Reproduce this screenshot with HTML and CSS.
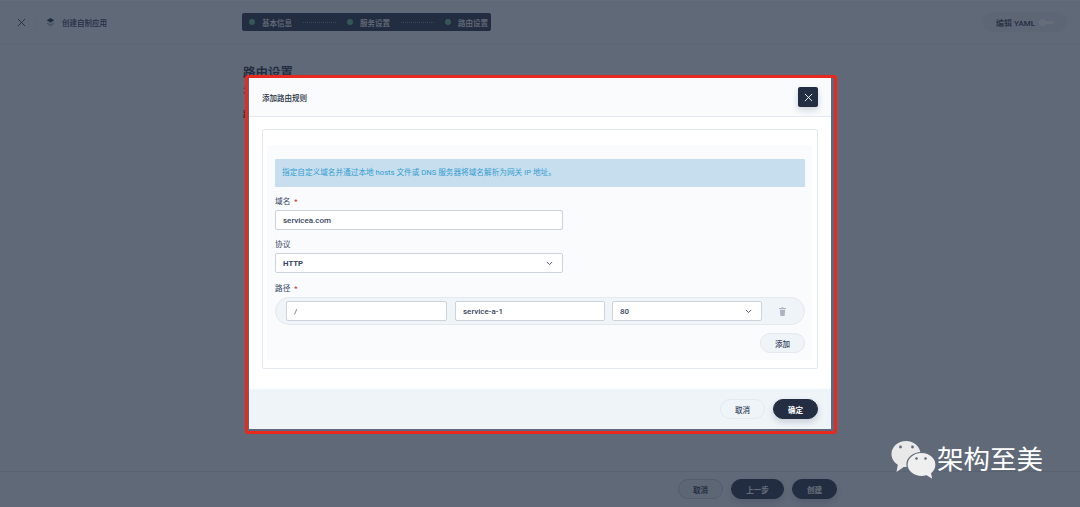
FILE: index.html
```html
<!DOCTYPE html>
<html lang="zh-CN">
<head>
<meta charset="utf-8">
<title>添加路由规则</title>
<link rel="stylesheet" href="styles.css">
</head>
<body>
<div class="page">
  <header class="topbar">
    <svg class="close-icon" viewBox="0 0 10 10"><path d="M1 1l8 8M9 1l-8 8"/></svg>
    <span class="vline"></span>
    <svg class="app-icon" viewBox="0 0 12 12"><path class="layer" d="M1.500 6.500L6 8.700l4.500-2.200L11 8.200 6 12 1 8.200z"/><path d="M6 .5l5 3L6 7 1 3.500z"/></svg>
    <span class="app-title">创建自制应用</span>
    <nav class="steps">
      <span class="dot"></span><span class="step">基本信息</span><span class="dash"></span>
      <span class="dot"></span><span class="step">服务设置</span><span class="dash"></span>
      <span class="dot"></span><span class="step">路由设置</span>
    </nav>
    <div class="yaml"><span>编辑 YAML</span><span class="toggle"></span></div>
  </header>
  <main class="content">
    <h1>路由设置</h1>
    <p class="sub">为应用配置路由规则</p>
    <p class="sub-bold">路由规则</p>
  </main>
  <footer class="bottombar">
    <button class="btn ghost">取消</button>
    <button class="btn dark long">上一步</button>
    <button class="btn dark">创建</button>
  </footer>
</div>

<div class="overlay"></div>

<section class="modal">
  <div class="modal-inner">
    <div class="modal-head">
      <span>添加路由规则</span>
      <button class="modal-x"><svg viewBox="0 0 10 10"><path d="M1 1l8 8M9 1l-8 8"/></svg></button>
    </div>
    <div class="modal-body">
      <div class="card">
        <div class="zone">
          <div class="alert">指定自定义域名并通过本地 hosts 文件或 DNS 服务器将域名解析为网关 IP 地址。</div>
          <label class="lbl">域名<i>*</i></label>
          <div class="field wide">servicea.com</div>
          <label class="lbl">协议</label>
          <div class="field wide sel strong"><span>HTTP</span><svg class="chev" viewBox="0 0 8 5"><path d="M1 1l3 3 3-3"/></svg></div>
          <label class="lbl path-lbl">路径<i>*</i></label>
          <div class="path-row">
            <div class="field f1 light">/</div>
            <div class="field f2">service-a-1</div>
            <div class="field f3 sel"><span>80</span><svg class="chev" viewBox="0 0 8 5"><path d="M1 1l3 3 3-3"/></svg></div>
            <svg class="trash" viewBox="0 0 8 10"><path d="M3 0h2v1h3v1H0V1h3z"/><path d="M1 3h6l-.5 7h-5z"/></svg>
          </div>
          <div class="add-wrap"><button class="btn soft">添加</button></div>
        </div>
      </div>
    </div>
    <div class="modal-foot">
      <button class="btn soft">取消</button>
      <button class="btn dark ok">确定</button>
    </div>
  </div>
</section>

<div class="mark">
  <svg class="wechat" viewBox="0 0 44 44">
    <path class="b1" d="M14.500 5C6.500 5 0 10.800 0 18c0 4.500 2.500 8.400 6.300 10.800L5 36l7.200-5c.8.100 1.500.1 2.300.1C22.500 31 29 25.200 29 18S22.500 5 14.500 5z"/>
    <circle class="eye" cx="9" cy="11" r="1.400"/><circle class="eye" cx="21" cy="11" r="1.400"/>
    <path class="b2" d="M30 16.500c-8 0-14.500 5.300-14.500 12S22 40.500 30 40.500c1.800 0 3.500-.3 5.100-.7L41.500 44l-1.300-6.500c2.600-2.200 4.300-5.300 4.300-9C44.500 21.800 38 16.500 30 16.500z"/>
    <circle class="eye" cx="25" cy="22.500" r="1.300"/><circle class="eye" cx="34" cy="22.500" r="1.300"/>
  </svg>
  <span>架构至美</span>
</div>
</body>
</html>
```
FILE: styles.css
```css
* { box-sizing: border-box; }
html, body { margin: 0; height: 507px; overflow: hidden; }
body {
  position: relative;
  width: 1080px;
  background: #eff4f9;
  font-family: Roboto, "Noto Sans CJK SC", sans-serif;
  font-size: 7.650px;
  color: #242e42;
}
button { font: inherit; cursor: pointer; }

.page { height: 507px; display: flex; flex-direction: column; border-top: 1px solid #fff; }

.topbar {
  height: 43px;
  flex: none;
  display: flex;
  align-items: center;
  padding: 0 13px 0 17px;
  border-bottom: 1px solid #e3e9ef;
}
.close-icon { width: 9px; height: 9px; fill: none; stroke: #242e42; stroke-width: 1; flex: none; }
.vline { width: 1px; height: 13px; background: #e3e9ef; margin: 0 10px 0 9px; }
.app-icon { width: 9px; height: 10px; fill: #242e42; flex: none; }
.app-icon .layer { fill: #a1aab7; }
.app-title { margin-left: 7px; width: 180px; font-size: 7.500px; font-weight: 500; color: #242e42; }
.steps {
  width: 249px;
  height: 18px;
  background: #242e42;
  border-radius: 2px;
  display: flex;
  align-items: center;
  padding-left: 7px;
  color: #fff;
  font-size: 7.500px;
  font-weight: 500;
}
.dot { width: 6px; height: 6px; border-radius: 50%; background: #55bc8a; margin-right: 7px; flex: none; }
.step { width: 31px; flex: none; }
.dash { width: 33px; margin: 0 11px 0 10px; border-top: 1px dotted #79879c; flex: none; }
.yaml {
  margin-left: auto;
  width: 84px;
  height: 20px;
  border-radius: 10px;
  background: #e3e9ef;
  display: flex;
  align-items: center;
  padding-left: 13px;
  font-size: 8px;
  font-weight: 500;
}
.toggle { position: relative; width: 15px; height: 3px; background: #fff; border-radius: 2px; margin-left: 4px; }
.toggle::before { content: ""; position: absolute; left: 0; top: -2px; width: 7px; height: 7px; border-radius: 50%; background: #fff; }

.content { flex: 1; padding: 19px 0 0 243px; }
.content h1 { margin: 0; font-size: 12.500px; line-height: 20px; font-weight: 700; }
.sub { margin: 3px 0 0; line-height: 10px; }
.sub-bold { margin: 14px 0 0; line-height: 10px; font-weight: 700; }

.bottombar {
  height: 36px;
  flex: none;
  border-top: 1px solid #d8dee5;
  display: flex;
  justify-content: flex-end;
  gap: 8px;
  padding: 7px 243px 0 0;
}

.btn {
  height: 20px;
  width: 45px;
  padding: 0;
  border-radius: 10px;
  border: 1px solid #e3e9ef;
  background: #eff4f9;
  color: #36435c;
  font-weight: 700;
  font-size: 7.500px;
}
.btn.long { width: 53px; }
.btn.ghost { background: #e3e9ef; border-color: #c1c9d1; color: #242e42; }
.btn.dark { background: #242e42; border-color: #242e42; color: #fff; box-shadow: 0 3px 6px rgba(36,46,66,.2); }
.btn.soft { font-weight: 500; }

.overlay { position: absolute; inset: 0; background: rgba(36,46,66,.7); }

.modal {
  position: absolute;
  left: 245px;
  top: 75px;
  width: 592px;
  height: 359px;
  border: 3px solid #e8291f;
  border-radius: 3px;
  padding: 0 3px 2px 1px;
  background: #5f6878;
}
.modal-inner { height: 100%; background: #fff; display: flex; flex-direction: column; border-radius: 2px; }
.modal-head {
  height: 39px;
  flex: none;
  padding: 0 13px;
  background: #f9fbfd;
  border-bottom: 1px solid #e3e9ef;
  display: flex;
  align-items: center;
  justify-content: space-between;
  font-size: 7.500px;
  font-weight: 500;
}
.modal-x {
  width: 20px;
  height: 20px;
  padding: 0;
  border: 0;
  border-radius: 2px;
  background: #242e42;
  display: flex;
  align-items: center;
  justify-content: center;
  box-shadow: 0 3px 6px rgba(36,46,66,.2);
}
.modal-x svg { width: 9px; height: 9px; fill: none; stroke: #fff; stroke-width: 1; }
.modal-body { flex: 1; padding: 12px 13px 0; }
.card { height: 240px; border: 1px solid #e3e9ef; border-radius: 2px; padding: 15px 5px 7px 4px; }
.zone { height: 215px; background: #f9fbfd; padding: 14px 7px 0 8px; }
.alert {
  height: 28px;
  line-height: 28px;
  padding-left: 7px;
  background: #c7deef;
  color: #329dce;
  border-radius: 1px;
}
.lbl { display: block; height: 14px; line-height: 12px; margin-top: 9px; color: #36435c; }
.lbl i { color: #ca2621; font-style: normal; margin-left: 4px; }
.path-lbl { margin-top: 10px; }
.field {
  height: 20px;
  background: #fff;
  border: 1px solid #ccd3db;
  border-radius: 2px;
  display: flex;
  align-items: center;
  justify-content: space-between;
  padding: 0 9px 0 7px;
  color: #36435c;
  font-size: 8px;
  font-weight: 500;
}
.wide { width: 288px; }
.strong { font-weight: 700; font-size: 7.800px; }
.light { font-weight: 400; }
.chev { width: 7px; height: 4.500px; fill: none; stroke: #36435c; stroke-width: 1; }
.path-row {
  height: 28px;
  display: flex;
  align-items: center;
  gap: 8px;
  border: 1px solid #e3e9ef;
  border-radius: 14px;
  background: #eff4f9;
  padding-left: 10px;
}
.f1 { width: 161px; }
.f2 { width: 150px; }
.f3 { width: 150px; margin-left: -1px; }
.trash { width: 7px; height: 9px; fill: #abb4be; margin-left: 9px; }
.add-wrap { display: flex; justify-content: flex-end; margin-top: 8px; }
.modal-foot {
  height: 40px;
  flex: none;
  background: #eff4f9;
  display: flex;
  justify-content: flex-end;
  align-items: center;
  gap: 8px;
  padding-right: 13px;
}
.modal-foot .btn { color: #36435c; }
.modal-foot .btn.ok { color: #fff; }

.mark {
  position: absolute;
  left: 891px;
  top: 436px;
  display: flex;
  align-items: center;
  gap: 1px;
  color: #fff;
  font-family: "Noto Sans CJK SC", sans-serif;
  font-size: 26.500px;
  line-height: 44px;
}
.wechat { width: 45px; height: 44px; flex: none; }
.wechat .b1 { fill: #e9e9e9; }
.wechat .b2 { fill: #efefef; stroke: #616979; stroke-width: 1.200; }
.wechat .eye { fill: #616979; }
```
